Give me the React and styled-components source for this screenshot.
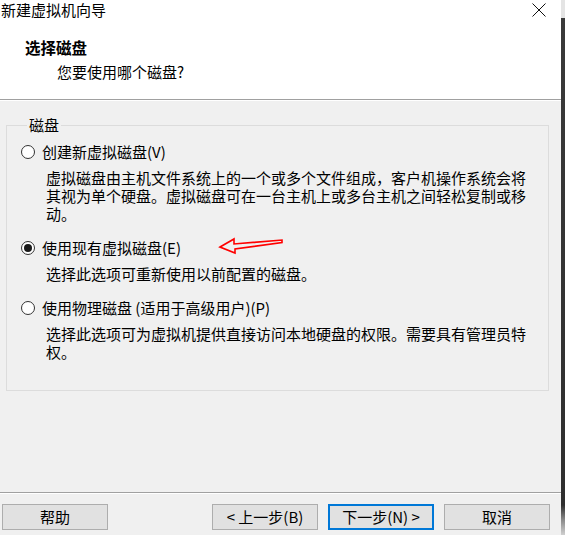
import React from "react";
import styled, { createGlobalStyle } from "styled-components";

const Global = createGlobalStyle`
  html, body { margin: 0; padding: 0; }
  body {
    font-family: "Noto Sans CJK SC", "Noto Sans", sans-serif;
    font-size: 15px;
    color: #000;
    background: #f0f0f0;
  }
  * { box-sizing: border-box; }
`;

const Screen = styled.div`
  display: flex;
  width: 565px;
  height: 535px;
  overflow: hidden;
`;

const Window = styled.div`
  width: 561px;
  height: 535px;
  display: flex;
  flex-direction: column;
  background: #f0f0f0;
`;

const EdgeStrip = styled.div`
  width: 4px;
  background: linear-gradient(
    to bottom,
    #e4e4e4 0px,
    #e4e4e4 18px,
    #3a3a3a 18px,
    #2e2e2e 505px,
    #8a8a8a 520px,
    #d0d0d0 535px
  );
`;

const TitleBar = styled.div`
  height: 20px;
  background: #fff;
  display: flex;
  align-items: center;
  justify-content: space-between;
  padding-left: 1px;
  padding-right: 15px;
`;

const TitleText = styled.span`
  font-size: 15px;
  line-height: 20px;
`;

const CloseIcon = styled.svg`
  width: 14px;
  height: 14px;
  display: block;
  margin-top: 0px;
`;

const Header = styled.div`
  height: 80px;
  background: #fff;
  padding-top: 17px;
  border-bottom: 1px solid #a0a0a0;
`;

const HeaderTitle = styled.div`
  font-weight: 700;
  font-size: 15.5px;
  line-height: 20px;
  padding-left: 25px;
`;

const HeaderSub = styled.div`
  font-size: 15px;
  line-height: 20px;
  padding-left: 57px;
  margin-top: 5px;
`;

const Body = styled.div`
  flex: 1;
  padding-top: 14px;
  border-top: 1px solid #fff;
`;

const GroupBox = styled.fieldset`
  margin: 0 12px 0 6px;
  padding: 7px 0 29px 14px;
  border: 1px solid #dcdcdc;
  min-width: 0;
`;

const Legend = styled.legend`
  margin-left: 6px;
  padding: 0 2px;
  font-size: 15px;
  line-height: 20px;
`;

const OptionRow = styled.label`
  display: flex;
  align-items: center;
  height: 20px;
  gap: 7px;
  margin-top: ${(p) => (p.$first ? "0px" : "15px")};
`;

const Radio = styled.span`
  width: 14px;
  height: 14px;
  border-radius: 50%;
  border: 1px solid #333;
  background: #fff;
  display: flex;
  align-items: center;
  justify-content: center;
  flex: none;
  &::after {
    content: "";
    width: 8px;
    height: 8px;
    border-radius: 50%;
    background: #1a1a1a;
    display: ${(p) => (p.$checked ? "block" : "none")};
  }
`;

const OptionText = styled.span`
  font-size: 15px;
  line-height: 20px;
  white-space: nowrap;
`;

const Desc = styled.div`
  margin-top: 7px;
  margin-left: 25px;
  width: 482px;
  font-size: 15px;
  line-height: 18px;
`;

const ArrowMark = styled.svg`
  display: block;
  width: 68px;
  height: 20px;
  margin-left: 30px;
  margin-top: -6px;
`;

const Footer = styled.div`
  border-top: 1px solid #a0a0a0;
  box-shadow: inset 0 1px 0 #fff;
  padding: 11px 11px 5px 2px;
  display: flex;
  align-items: center;
`;

const Button = styled.button`
  width: 106px;
  height: 26px;
  margin: 0;
  padding: 0;
  font-family: "Noto Sans CJK SC", "Noto Sans", sans-serif;
  font-size: 15px;
  line-height: 22px;
  color: #000;
  background: #e1e1e1;
  border: ${(p) => (p.$focused ? "2px solid #0078d7" : "1px solid #adadad")};
  margin-left: ${(p) => p.$gap || 0}px;
`;

const Spacer = styled.div`
  flex: 1;
`;

export default function App() {
  return (
    <>
      <Global />
      <Screen>
        <Window>
          <TitleBar>
            <TitleText>新建虚拟机向导</TitleText>
            <CloseIcon viewBox="0 0 14 14">
              <path d="M0.5 0.5 L13.5 13.5 M13.5 0.5 L0.5 13.5" stroke="#111" strokeWidth="1" fill="none" />
            </CloseIcon>
          </TitleBar>
          <Header>
            <HeaderTitle>选择磁盘</HeaderTitle>
            <HeaderSub>您要使用哪个磁盘?</HeaderSub>
          </Header>
          <Body>
            <GroupBox>
              <Legend>磁盘</Legend>
              <OptionRow $first>
                <Radio />
                <OptionText>创建新虚拟磁盘(V)</OptionText>
              </OptionRow>
              <Desc>
                虚拟磁盘由主机文件系统上的一个或多个文件组成，客户机操作系统会将其视为单个硬盘。虚拟磁盘可在一台主机上或多台主机之间轻松复制或移动。
              </Desc>
              <OptionRow>
                <Radio $checked />
                <OptionText>使用现有虚拟磁盘(E)</OptionText>
                <ArrowMark viewBox="0 0 68 20">
                  <path
                    d="M2 12 L16 4 L16 9 L64 5 L64 7.5 L17 14 L17 18 Z"
                    fill="none"
                    stroke="#f00"
                    strokeWidth="1.6"
                    strokeLinejoin="miter"
                  />
                </ArrowMark>
              </OptionRow>
              <Desc>选择此选项可重新使用以前配置的磁盘。</Desc>
              <OptionRow>
                <Radio />
                <OptionText>使用物理磁盘 (适用于高级用户)(P)</OptionText>
              </OptionRow>
              <Desc>选择此选项可为虚拟机提供直接访问本地硬盘的权限。需要具有管理员特权。</Desc>
            </GroupBox>
          </Body>
          <Footer>
            <Button>帮助</Button>
            <Spacer />
            <Button>&lt; 上一步(B)</Button>
            <Button $focused $gap={10}>下一步(N) &gt;</Button>
            <Button $gap={10}>取消</Button>
          </Footer>
        </Window>
        <EdgeStrip />
      </Screen>
    </>
  );
}
